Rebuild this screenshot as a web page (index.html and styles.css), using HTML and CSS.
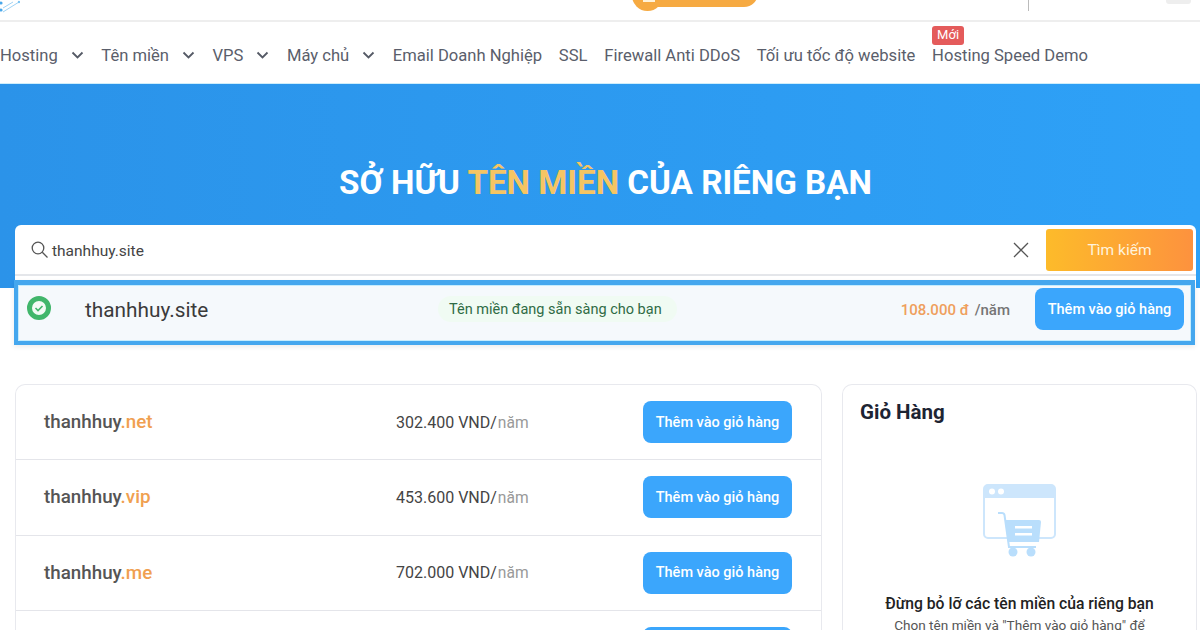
FILE: index.html
```html
<!DOCTYPE html>
<html lang="vi">
<head>
  <meta charset="UTF-8">
  <title>Tên miền</title>
  <link rel="stylesheet" href="styles.css">
</head>
<body>
  <!-- top bar, cut off by the window -->
  <div class="topbar">
    <svg class="logo" width="20" height="13" viewBox="0 0 20 13" fill="none" stroke="#9fd3f5" stroke-width="1">
      <path d="M3 12 L19 2"/><path d="M3 8 L13 2"/>
      <circle cx="1" cy="3" r="1.6" fill="#4aa8ea" stroke="none"/>
      <circle cx="1" cy="10" r="1.6" fill="#4aa8ea" stroke="none"/>
      <circle cx="19" cy="2" r="1.2" fill="#7cc4f2" stroke="none"/>
    </svg>
    <div class="promo"><span class="promo-circle"></span><span class="promo-icon"></span></div>
    <span class="top-sep"></span>
    <span class="top-chip"></span>
  </div>

  <nav class="nav">
    <a class="nav-item">Hosting <svg class="chev" viewBox="0 0 12 8"><path d="M1 1.5 L6 6.5 L11 1.5"/></svg></a>
    <a class="nav-item">Tên miền <svg class="chev" viewBox="0 0 12 8"><path d="M1 1.5 L6 6.5 L11 1.5"/></svg></a>
    <a class="nav-item">VPS <svg class="chev" viewBox="0 0 12 8"><path d="M1 1.5 L6 6.5 L11 1.5"/></svg></a>
    <a class="nav-item">Máy chủ <svg class="chev" viewBox="0 0 12 8"><path d="M1 1.5 L6 6.5 L11 1.5"/></svg></a>
    <a class="nav-item">Email Doanh Nghiệp</a>
    <a class="nav-item">SSL</a>
    <a class="nav-item">Firewall Anti DDoS</a>
    <a class="nav-item">Tối ưu tốc độ website</a>
    <a class="nav-item"><span class="badge">Mới</span>Hosting Speed Demo</a>
  </nav>

  <section class="hero">
    <h1>SỞ HỮU <span class="gold">TÊN MIỀN</span> CỦA RIÊNG BẠN</h1>
    <div class="search-panel">
      <div class="search-row">
        <svg class="search-icon" width="18" height="18" viewBox="0 0 18 18" fill="none" stroke="#555" stroke-width="1.3"><circle cx="7" cy="7" r="5.8"/><path d="M11.3 11.3 L16.5 16.5"/></svg>
        <span class="search-text">thanhhuy.site</span>
        <svg class="clear-icon" width="16" height="16" viewBox="0 0 16 16" fill="none" stroke="#555" stroke-width="1.3"><path d="M1 1 L15 15 M15 1 L1 15"/></svg>
        <button class="search-btn">Tìm kiếm</button>
      </div>
      <div class="result">
        <svg class="ok-icon" width="26" height="26" viewBox="0 0 26 26" fill="none"><circle cx="13" cy="13" r="9.5" fill="#f3faf5" stroke="#41b66b" stroke-width="5"/><path d="M9.5 13 L12 15.5 L16.5 11" stroke="#41b66b" stroke-width="1.6"/></svg>
        <span class="result-name">thanhhuy.site</span>
        <span class="result-note">Tên miền đang sẵn sàng cho bạn</span>
        <span class="result-price"><b>108.000 đ</b> /năm</span>
        <button class="add-btn">Thêm vào giỏ hàng</button>
      </div>
    </div>
  </section>

  <main class="content">
    <div class="domains">
      <div class="domain-row">
        <span class="domain">thanhhuy<span class="tld">.net</span></span>
        <span class="price">302.400 VND/<small>năm</small></span>
        <button class="add-btn">Thêm vào giỏ hàng</button>
      </div>
      <div class="domain-row">
        <span class="domain">thanhhuy<span class="tld">.vip</span></span>
        <span class="price">453.600 VND/<small>năm</small></span>
        <button class="add-btn">Thêm vào giỏ hàng</button>
      </div>
      <div class="domain-row">
        <span class="domain">thanhhuy<span class="tld">.me</span></span>
        <span class="price">702.000 VND/<small>năm</small></span>
        <button class="add-btn">Thêm vào giỏ hàng</button>
      </div>
      <!-- only the top edge of the next button is in the window -->
      <div class="domain-row">
        <span class="domain"></span>
        <span class="price"></span>
        <button class="add-btn"></button>
      </div>
    </div>

    <aside class="cart">
      <h2>Giỏ Hàng</h2>
      <svg class="cart-art" width="74" height="74" viewBox="0 0 74 74">
        <rect x="1" y="1" width="71" height="53" rx="4" fill="#fff" stroke="#cde6fc" stroke-width="2"/>
        <path d="M1 14 V5 a4 4 0 0 1 4-4 H68 a4 4 0 0 1 4 4 V14 Z" fill="#cde6fc"/>
        <circle cx="9" cy="7.5" r="3" fill="#fff"/><circle cx="18" cy="7.5" r="3" fill="#fff"/>
        <path d="M15 29 H19 Q21 29 21.5 31 L26 63 H53" fill="none" stroke="#b9defc" stroke-width="2"/>
        <path d="M22 36 H56 Q58 36 58 38 L56 58 H25 Z" fill="#b9defc"/>
        <rect x="32" y="42" width="17" height="2.5" fill="#fff"/><rect x="32" y="49" width="17" height="2.5" fill="#fff"/>
        <circle cx="30" cy="68" r="4.5" fill="#b9defc"/><circle cx="48" cy="68" r="4.5" fill="#b9defc"/>
      </svg>
      <p class="cart-title">Đừng bỏ lỡ các tên miền của riêng bạn</p>
      <p class="cart-note">Chọn tên miền và "Thêm vào giỏ hàng" để</p>
    </aside>
  </main>
</body>
</html>
```

FILE: styles.css
```css
* {
  box-sizing: border-box;
}

html, body {
  height: 630px;
  overflow: hidden;
}

body {
  margin: 0;
  background: #fff;
  color: #333;
  font-family: Roboto, "Noto Sans", sans-serif;
}

button {
  font-family: inherit;
  border: none;
  cursor: pointer;
}

/* top bar */
.topbar {
  display: flex;
  align-items: flex-end;
  height: 22px;
  overflow: hidden;
  border-bottom: 2px solid #eeeeee;
}

.logo {
  margin-bottom: 7px;
}

.promo {
  position: relative;
  width: 127px;
  height: 30px;
  margin-left: 611px;
  margin-bottom: 13px;
  background: #f6aa42;
  border-radius: 14px;
}

.promo-circle {
  position: absolute;
  left: 1px;
  bottom: -4px;
  width: 31px;
  height: 31px;
  background: #f6aa42;
  border-radius: 50%;
}

.promo-icon {
  position: absolute;
  left: 12px;
  bottom: 5px;
  width: 12px;
  height: 8px;
  background: #fff2d8;
}

.top-sep {
  width: 1px;
  height: 11px;
  margin-left: 270px;
  margin-bottom: 9px;
  background: #bbb;
}

.top-chip {
  width: 25px;
  height: 10px;
  margin-left: 137px;
  margin-bottom: 16px;
  background: #eee;
  border-radius: 3px;
}

/* nav */
.nav {
  display: flex;
  align-items: center;
  gap: 16.7px;
  height: 61px;
  padding-top: 5px;
  color: #5a5e6b;
  font-size: 16.6px;
}

.nav-item {
  display: flex;
  align-items: center;
  white-space: nowrap;
  position: relative;
}

.chev {
  width: 13px;
  height: 8px;
  margin-left: 12.8px;
  margin-right: 1px;
  fill: none;
  stroke: #555a66;
  stroke-width: 1.8;
}

.badge {
  position: absolute;
  left: 0;
  top: -20px;
  width: 32px;
  height: 19px;
  background: #e45b5b;
  color: #fff;
  font-size: 13px;
  line-height: 18px;
  text-align: center;
  border-radius: 3px;
}

/* hero */
.hero {
  height: 205px;
  padding: 0 4px 0 15px;
  background: linear-gradient(90deg, #2b93e9, #2ea1f7);
  border-top: 1px solid #cfeefb;
}

.hero h1 {
  margin: 0;
  padding-top: 79px;
  height: 141px;
  color: #fff;
  font-size: 33.2px;
  line-height: 40px;
  font-weight: 700;
  text-align: center;
}

.gold {
  color: #f5c563;
}

.search-panel {
  background: #fff;
  border-radius: 6px 6px 0 0;
  position: relative;
}

.search-row {
  display: flex;
  align-items: center;
  height: 51px;
  padding: 0 3px 0 16px;
  border-bottom: 2px solid #e4e6ea;
}

.search-text {
  flex: 1;
  margin-left: 3px;
  padding-top: 2px;
  font-size: 15.5px;
  color: #444;
}

.clear-icon {
  margin-right: 17px;
}

.search-btn {
  width: 147px;
  height: 42px;
  background: linear-gradient(90deg, #fdbb2a, #fd923e);
  color: #fff3dc;
  font-size: 15.5px;
  border-radius: 3px;
}

.result {
  display: flex;
  align-items: center;
  height: 65px;
  margin: 4px 1px 0 -1px;
  padding: 0 7px 8px 8px;
  background: #f5f9fc;
  border: 4px solid #45a7ee;
  border-top-width: 5px;
  box-shadow: inset 0 0 0 1px #c5ecfd, 0 2px 5px rgba(0, 0, 0, .08);
}

.ok-icon {
  margin-bottom: 2px;
}

.result-name {
  margin-left: 33px;
  width: 353px;
  padding-top: 2px;
  font-size: 20.8px;
  color: #3b3b3b;
}

.result-note {
  padding: 5px 15px 4px 11px;
  background: #f0fbf3;
  border-radius: 14px;
  color: #2f6b45;
  font-size: 14.5px;
}

.result-price {
  margin-left: auto;
  margin-right: 25px;
  padding-top: 2px;
  font-size: 15px;
  color: #757575;
  font-weight: 500;
}

.result-price b {
  margin-right: 2px;
  color: #ef9f5c;
  font-weight: 500;
}

.add-btn {
  width: 149px;
  height: 42px;
  background: #3ba6fc;
  color: #fff;
  font-size: 14.5px;
  font-weight: 500;
  border-radius: 8px;
}

/* lower part */
.content {
  display: flex;
  gap: 20px;
  padding: 96px 3px 0 15px;
}

.domains {
  width: 807px;
  height: 246px;
  overflow: hidden;
  background: #fff;
  border: 1px solid #e8e9ee;
  border-bottom: none;
  border-radius: 10px 10px 0 0;
}

.domain-row {
  display: flex;
  align-items: center;
  height: 75.3px;
  padding: 0 29px 0 28px;
  border-bottom: 1px solid #e4e5ea;
}

.domain {
  width: 352px;
  font-size: 18.8px;
  font-weight: 500;
  color: #555;
}

.tld {
  color: #f0a050;
}

.price {
  width: 247px;
  font-size: 16px;
  color: #444;
}

.price small {
  margin-left: 1px;
  font-size: 15.6px;
  color: #999;
}

.cart {
  flex: 1;
  height: 246px;
  overflow: hidden;
  padding: 0 17px;
  text-align: center;
  background: #fff;
  border: 1px solid #e8e9ee;
  border-bottom: none;
  border-radius: 10px 10px 0 0;
}

.cart h2 {
  margin: 15px 0 0;
  font-size: 20.5px;
  line-height: 24px;
  font-weight: 700;
  color: #1d2433;
  text-align: left;
}

.cart-art {
  display: block;
  margin: 60px auto 0;
}

.cart-title {
  margin: 36px -10px 0;
  font-size: 15.7px;
  font-weight: 500;
  line-height: 20px;
  color: #222;
}

.cart-note {
  margin: 2px -10px 0;
  font-size: 13.6px;
  line-height: 18px;
  color: #555;
}
```
